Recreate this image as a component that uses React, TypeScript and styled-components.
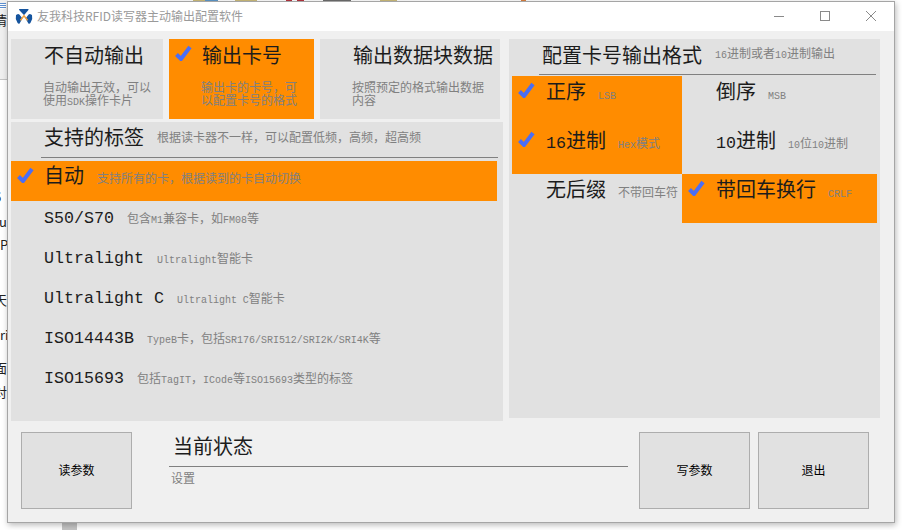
import React from 'react';
import styled, { createGlobalStyle } from 'styled-components';

const GlobalStyle = createGlobalStyle`
  html, body {
    margin: 0;
    padding: 0;
    background: #fff;
  }
  body {
    font-family: "Noto Sans CJK SC", "Liberation Sans", sans-serif;
  }
`;

// half-width latin, the same cell width as in the old bitmap font
const mix = (text: string) =>
  text.split(/([\x20-\x7e]+)/).map((part, index) =>
    /^[\x20-\x7e]+$/.test(part) ? <Latin key={index}>{part}</Latin> : part,
  );

const Check = () => (
  <CheckIcon viewBox="0 0 17 16" aria-hidden="true">
    <path d="M1.5 9.5 L6 14 L15 2" />
  </CheckIcon>
);

const Logo = () => (
  <LogoIcon viewBox="0 0 18 16" aria-hidden="true">
    <path d="M4.5 1 H13 Q14 1 13.4 2 L9.6 6.6 Q9 7.2 8.4 6.6 L4.2 2 Q3.6 1 4.5 1 Z" fill="#15549e" />
    <path d="M1 7 L3 6 Q4 6 4.6 6.8 L7.4 10.4 L4.6 15.4 Q3.5 16 2.6 15 L0.8 11 Z" fill="#15549e" />
    <path d="M17 7 L15 6 Q14 6 13.4 6.8 L10.6 10.4 L13.4 15.4 Q14.5 16 15.4 15 L17.2 11 Z" fill="#15549e" />
    <path d="M5.4 12.4 L9 7.8 L12.6 12.4" fill="none" stroke="#f2a13c" strokeWidth="1.5" />
  </LogoIcon>
);

const tiles = [
  { title: '不自动输出', lines: ['自动输出无效，可以', '使用SDK操作卡片'], width: 152, checked: false },
  { title: '输出卡号', lines: ['输出卡的卡号，可', '以配置卡号的格式'], width: 145, checked: true },
  { title: '输出数据块数据', lines: ['按照预定的格式输出数据', '内容'], width: 180, checked: false },
];

const tags = [
  { name: '自动', desc: '支持所有的卡，根据读到的卡自动切换', checked: true },
  { name: 'S50/S70', desc: '包含M1兼容卡，如FM08等', checked: false },
  { name: 'Ultralight', desc: 'Ultralight智能卡', checked: false },
  { name: 'Ultralight C', desc: 'Ultralight C智能卡', checked: false },
  { name: 'ISO14443B', desc: 'TypeB卡，包括SR176/SRI512/SRI2K/SRI4K等', checked: false },
  { name: 'ISO15693', desc: '包括TagIT，ICode等ISO15693类型的标签', checked: false },
];

const formats = [
  { name: '正序', desc: 'LSB', checked: true },
  { name: '倒序', desc: 'MSB', checked: false },
  { name: '16进制', desc: 'Hex模式', checked: true },
  { name: '10进制', desc: '10位10进制', checked: false },
  { name: '无后缀', desc: '不带回车符', checked: false },
  { name: '带回车换行', desc: 'CRLF', checked: true },
];

// bits of the windows behind, clipped by this one
const behind = [
  { top: 12, left: -6, text: '情' },
  { top: 189, left: -6, text: '6' },
  { top: 214, left: -1, text: 'ug' },
  { top: 237, left: 0, text: 'Pl' },
  { top: 292, left: -6, text: '天' },
  { top: 327, left: 0, text: 'ri' },
  { top: 360, left: -6, text: '面' },
  { top: 384, left: -6, text: '对' },
];

const topSpecks = [
  { left: 193, width: 12, color: '#cdbb7a' },
  { left: 205, width: 13, color: '#5d97c9' },
  { left: 235, width: 22, color: '#cdbb7a' },
  { left: 286, width: 6, color: '#b5343e' },
  { left: 297, width: 7, color: '#b5343e' },
  { left: 323, width: 28, color: '#6d6d6d' },
  { left: 380, width: 17, color: '#cdbb7a' },
  { left: 521, width: 5, color: '#d9803f' },
];

const App = () => (
  <>
    <GlobalStyle />
    <Desktop>
      <BehindPanel />
      <BehindLines />
      {behind.map((item) => (
        <BehindText key={item.top} $top={item.top} $left={item.left}>
          {item.text}
        </BehindText>
      ))}
      {topSpecks.map((item) => (
        <TopSpeck key={item.left} $left={item.left} $width={item.width} $color={item.color} />
      ))}
      <BehindBar />
      <Window>
        <TitleBar>
          <Logo />
          <TitleText>友我科技RFID读写器主动输出配置软件</TitleText>
          <WindowControls>
            <WindowButton>
              <svg width="12" height="12" viewBox="0 0 12 12" aria-hidden="true">
                <path d="M1 6.5 H11" />
              </svg>
            </WindowButton>
            <WindowButton>
              <svg width="12" height="12" viewBox="0 0 12 12" aria-hidden="true">
                <rect x="1.5" y="1.5" width="9" height="9" />
              </svg>
            </WindowButton>
            <WindowButton>
              <svg width="12" height="12" viewBox="0 0 12 12" aria-hidden="true">
                <path d="M1 1 L11 11 M11 1 L1 11" />
              </svg>
            </WindowButton>
          </WindowControls>
        </TitleBar>

        <Content>
          <LeftColumn>
            <TileRow>
              {tiles.map((tile) => (
                <Tile key={tile.title} $width={tile.width} $on={tile.checked}>
                  <TileHead>
                    <CheckSlot>{tile.checked && <Check />}</CheckSlot>
                    <Name>{tile.title}</Name>
                  </TileHead>
                  <TileDesc>
                    {tile.lines.map((line) => (
                      <div key={line}>{mix(line)}</div>
                    ))}
                  </TileDesc>
                </Tile>
              ))}
            </TileRow>

            <TagPanel>
              <PanelHead $width={457} $drop={5}>
                <Name>支持的标签</Name>
                <Desc>根据读卡器不一样，可以配置低频，高频，超高频</Desc>
              </PanelHead>
              <TagList>
                {tags.map((tag) => (
                  <TagRow key={tag.name} $on={tag.checked}>
                    <CheckSlot>{tag.checked && <Check />}</CheckSlot>
                    <Name>{mix(tag.name)}</Name>
                    <Desc>{mix(tag.desc)}</Desc>
                  </TagRow>
                ))}
              </TagList>
            </TagPanel>
          </LeftColumn>

          <FormatPanel>
            <PanelHead $width={337} $drop={4}>
              <Name>配置卡号输出格式</Name>
              <Desc>{mix('16进制或者10进制输出')}</Desc>
            </PanelHead>
            <FormatGrid>
              {formats.map((format) => (
                <FormatCell key={format.name} $on={format.checked}>
                  <CheckSlot>{format.checked && <Check />}</CheckSlot>
                  <Name>{mix(format.name)}</Name>
                  <Desc>{mix(format.desc)}</Desc>
                </FormatCell>
              ))}
            </FormatGrid>
          </FormatPanel>
        </Content>

        <Footer>
          <ActionButton>读参数</ActionButton>
          <Status>
            <StatusTitle>
              <Name>当前状态</Name>
            </StatusTitle>
            <StatusText>设置</StatusText>
          </Status>
          <ActionButton>写参数</ActionButton>
          <ActionButton>退出</ActionButton>
        </Footer>
      </Window>
    </Desktop>
  </>
);

export default App;

const Desktop = styled.div`
  position: relative;
  width: 902px;
  height: 530px;
  overflow: hidden;
  padding: 1px 0 0 7px;
  box-sizing: border-box;
  background: #fff;
`;

const BehindPanel = styled.span`
  position: absolute;
  top: 0;
  left: 0;
  width: 8px;
  height: 79px;
  background: #efefef;
  border-bottom: 1px solid #c4c4c4;
`;

const BehindLines = styled.span`
  position: absolute;
  top: 3px;
  left: 0;
  width: 6px;
  height: 6px;
  background: repeating-linear-gradient(#5d8fd0 0 1px, #fff 1px 2px);
`;

const BehindText = styled.span<{ $top: number; $left: number }>`
  position: absolute;
  top: ${(p) => p.$top}px;
  left: ${(p) => p.$left}px;
  font-size: 13px;
  line-height: 16px;
  color: #222;
`;

const TopSpeck = styled.span<{ $left: number; $width: number; $color: string }>`
  position: absolute;
  top: 0;
  left: ${(p) => p.$left}px;
  width: ${(p) => p.$width}px;
  height: 1px;
  background: ${(p) => p.$color};
`;

const BehindBar = styled.span`
  position: absolute;
  left: 62px;
  top: 522px;
  width: 15px;
  height: 8px;
  background: #c4c4c4;
`;

const Window = styled.div`
  position: relative;
  display: flex;
  flex-direction: column;
  width: 888px;
  height: 522px;
  box-sizing: border-box;
  border: 1px solid #a5a5a5;
  background: #f0f0f0;
  box-shadow: 1px 2px 6px rgba(0, 0, 0, 0.28);
`;

const TitleBar = styled.div`
  display: flex;
  align-items: center;
  height: 29px;
  padding: 0 0 2px 7px;
  box-sizing: border-box;
  background: #fff;
  flex-shrink: 0;
`;

const LogoIcon = styled.svg`
  width: 18px;
  height: 16px;
  margin-right: 4px;
`;

const TitleText = styled.span`
  font-size: 12px;
  color: #9a9a9a;
  flex: 1;
`;

const WindowControls = styled.div`
  display: flex;
  height: 100%;
`;

const WindowButton = styled.div`
  display: flex;
  align-items: center;
  justify-content: center;
  width: 46px;
  height: 100%;

  svg {
    fill: none;
    stroke: #8a8a8a;
    stroke-width: 1;
  }
`;

const Content = styled.div`
  display: flex;
  gap: 6px;
  height: 382px;
  padding: 8px 0 0 3px;
  flex-shrink: 0;
`;

const LeftColumn = styled.div`
  display: flex;
  flex-direction: column;
  gap: 3px;
  width: 492px;
`;

const TileRow = styled.div`
  display: flex;
  gap: 6px;
  height: 80px;
`;

const Tile = styled.div<{ $width: number; $on: boolean }>`
  width: ${(p) => p.$width}px;
  padding-top: 5px;
  box-sizing: border-box;
  background: ${(p) => (p.$on ? '#ff8c00' : '#e1e1e1')};
`;

const TileHead = styled.div`
  display: flex;
`;

const CheckSlot = styled.div`
  width: 33px;
  height: 22px;
  padding: 1px 0 0 6px;
  box-sizing: border-box;
  flex-shrink: 0;
`;

const CheckIcon = styled.svg`
  display: block;
  width: 17px;
  height: 16px;

  path {
    fill: none;
    stroke: #4a6ef5;
    stroke-width: 4;
  }
`;

const Name = styled.span`
  font-size: 20px;
  line-height: 22px;
  color: #1c1c1c;
  white-space: nowrap;
`;

const Desc = styled.span`
  font-size: 12px;
  line-height: 14px;
  color: #808080;
  white-space: nowrap;
`;

const Latin = styled.span`
  font-family: "Liberation Mono", monospace;
  font-size: 0.833em;
`;

const TileDesc = styled.div`
  margin: 14px 0 0 32px;
  font-size: 12px;
  line-height: 13px;
  color: #808080;
  white-space: nowrap;
`;

const TagPanel = styled.div`
  display: flex;
  flex-direction: column;
  height: 299px;
  background: #e1e1e1;
`;

const PanelHead = styled.div<{ $width: number; $drop: number }>`
  display: flex;
  align-items: center;
  gap: 13px;
  width: ${(p) => p.$width}px;
  height: 36px;
  margin-left: 30px;
  padding: 0 0 ${(p) => p.$drop}px 3px;
  box-sizing: border-box;
  border-bottom: 1px solid #808080;
`;

const TagList = styled.div`
  display: flex;
  flex-direction: column;
  margin-top: 3px;
  width: 486px;
`;

const TagRow = styled.div<{ $on: boolean }>`
  display: flex;
  align-items: baseline;
  height: 40px;
  padding-top: 3px;
  box-sizing: border-box;
  background: ${(p) => (p.$on ? '#ff8c00' : 'transparent')};

  ${CheckSlot} {
    align-self: flex-start;
    padding-top: 3px;
  }

  ${Desc} {
    margin-left: 13px;
  }
`;

const FormatPanel = styled.div`
  height: 379px;
  width: 371px;
  background: #e1e1e1;
`;

const FormatGrid = styled.div`
  display: grid;
  grid-template-columns: 170px 195px;
  grid-auto-rows: 49px;
  margin: 1px 0 0 3px;
`;

const FormatCell = styled.div<{ $on: boolean }>`
  display: flex;
  align-items: baseline;
  padding-top: 4px;
  box-sizing: border-box;
  background: ${(p) => (p.$on ? '#ff8c00' : 'transparent')};

  ${CheckSlot} {
    align-self: flex-start;
    width: 34px;
    padding-top: 2px;
  }

  ${Desc} {
    margin-left: 12px;
  }
`;

const Footer = styled.div`
  display: flex;
  align-items: flex-start;
  margin-top: 11px;
  padding-left: 13px;
`;

const ActionButton = styled.div`
  display: flex;
  align-items: center;
  justify-content: center;
  width: 111px;
  height: 77px;
  margin-right: 8px;
  padding-bottom: 2px;
  box-sizing: border-box;
  border: 1px solid #adadad;
  background: #e1e1e1;
  font-size: 12px;
  color: #000;
`;

const Status = styled.div`
  width: 459px;
  margin: 0 11px 0 29px;
`;

const StatusTitle = styled.div`
  display: flex;
  align-items: center;
  height: 35px;
  padding: 0 0 6px 4px;
  box-sizing: border-box;
  border-bottom: 1px solid #808080;
`;

const StatusText = styled.div`
  margin: 3px 0 0 2px;
  font-size: 12px;
  line-height: 16px;
  color: #808080;
`;
